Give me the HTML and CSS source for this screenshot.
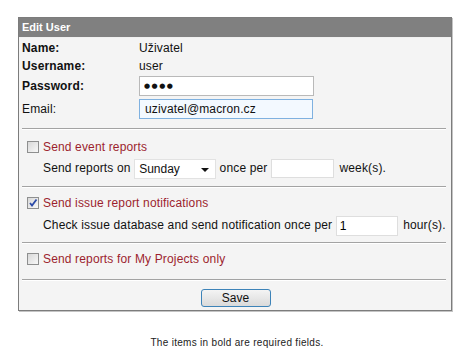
FILE: index.html
```html
<!DOCTYPE html>
<html lang="en">
<head>
<meta charset="UTF-8">
<meta name="viewport" content="width=device-width, initial-scale=1.0">
<title>Edit User</title>
<link rel="stylesheet" href="styles.css">
</head>
<body>

  <div class="panel">
    <div class="panel-title">Edit User</div>

    <div class="panel-body">
      <!-- Datos del usuario -->
      <div class="fields">
        <div class="field name-row">
          <span class="label required">Name:</span>
          <span class="value">Uživatel</span>
        </div>
        <div class="field user-row">
          <span class="label required">Username:</span>
          <span class="value">user</span>
        </div>
        <div class="field input-row">
          <span class="label required">Password:</span>
          <input class="text-input password" type="text" value="●●●●">
        </div>
        <div class="field input-row">
          <span class="label">Email:</span>
          <input class="text-input focused" type="text" value="uzivatel@macron.cz">
        </div>
      </div>

      <div class="separator"></div>

      <div class="section first">
        <label class="check-row">
          <span class="check"></span>
          <span class="check-text">Send event reports</span>
        </label>
        <div class="sub-row">Send reports on <span class="select">Sunday<svg class="arrow" width="8" height="4" viewBox="0 0 8 4"><path d="M0 0h8L4 4z" fill="#111"/></svg></span> once per <input class="small-input week" type="text" value=""> week(s).</div>
      </div>

      <div class="separator"></div>

      <div class="section second">
        <label class="check-row">
          <span class="check checked">
            <svg width="10" height="10" viewBox="0 0 10 10"><path d="M2 5l2 2.5L8.5 1.5" fill="none" stroke="#2b4aa8" stroke-width="1.8"/></svg>
          </span>
          <span class="check-text">Send issue report notifications</span>
        </label>
        <div class="sub-row">Check issue database and send notification once per <input class="small-input hour" type="text" value="1"> hour(s).</div>
      </div>

      <div class="separator"></div>

      <div class="section third">
        <label class="check-row">
          <span class="check"></span>
          <span class="check-text">Send reports for My Projects only</span>
        </label>
      </div>

      <div class="separator"></div>

      <div class="actions">
        <button class="save-button">Save</button>
      </div>
    </div>
  </div>

  <p class="note">The items in bold are required fields.</p>

</body>
</html>
```

FILE: styles.css
```css
  body {
      margin: 0;
      background-color: #fff;
      font-family: "Liberation Sans", Arial, sans-serif;
      font-size: 12px;
      color: #111;
  }

  /* Caja principal */
  .panel {
      width: 434px;
      margin: 17px 0 0 18px;
      border: 1px solid #7c7c7c;
      box-shadow: 1px 1px 0 #c4c4c4;
      box-sizing: border-box;
  }

  .panel-title {
      height: 19px;
      line-height: 19px;
      padding-left: 3px;
      background-color: #808080;
      color: #fff;
      font-size: 11px;
      font-weight: bold;
  }

  .panel-body {
      background-color: #f4f4f4;
      padding: 1px 5px 0 3px;
      border-top: 1px solid #f0f0f0;
      letter-spacing: 0.15px;
  }

  /* Filas de datos */
  .fields {
      padding-bottom: 8px;
  }

  .field {
      display: flex;
      align-items: center;
  }

  .label {
      width: 117px;
      font-size: 12px;
  }

  .label.required {
      font-weight: bold;
  }

  .name-row {
      height: 18px;
  }

  .user-row {
      height: 17px;
  }

  .input-row {
      height: 22px;
      margin-top: 1px;
  }

  .text-input {
      width: 175px;
      height: 20px;
      margin: 0;
      padding: 0 5px;
      border: 1px solid #b9b9b9;
      background-color: #fff;
      box-sizing: border-box;
      font-family: "Liberation Sans", Arial, sans-serif;
      font-size: 12px;
      letter-spacing: 0.15px;
      color: #111;
  }

  .text-input.password {
      padding-left: 4px;
      font-family: "DejaVu Sans", sans-serif;
      font-size: 7px;
      letter-spacing: 1.5px;
  }

  .text-input.focused {
      width: 174px;
      border-color: #7fb1e0;
      background-color: #f3f9ff;
  }

  .separator {
      height: 1px;
      background-color: #a3a3a3;
      border-bottom: 1px solid #fff;
  }

  /* Secciones con casillas */
  .section.first {
      padding: 7px 0 8px;
  }

  .section.second {
      padding: 5px 0 7px;
  }

  .section.second .sub-row {
      margin-top: 2px;
  }

  .section.third {
      padding: 5px 0 10px;
  }

  .check-row {
      display: flex;
      align-items: center;
      height: 20px;
      padding-left: 5px;
  }

  .check {
      display: flex;
      align-items: center;
      justify-content: center;
      width: 12px;
      height: 12px;
      margin-right: 4px;
      border: 1px solid #8e8f8f;
      background: linear-gradient(135deg, #d8d8d8, #f8f8f8);
      box-sizing: border-box;
  }

  .check-text {
      color: #9c1f2e;
  }

  .sub-row {
      height: 20px;
      line-height: 20px;
      margin-top: 1px;
      padding-left: 21px;
      white-space: nowrap;
  }

  .select {
      position: relative;
      display: inline-block;
      vertical-align: middle;
      width: 82px;
      height: 20px;
      padding-left: 4px;
      line-height: 18px;
      border: 1px solid #e2e2e2;
      background-color: #fff;
      box-sizing: border-box;
      font-size: 12px;
      letter-spacing: 0;
  }

  .select .arrow {
      position: absolute;
      right: 6px;
      top: 8px;
  }

  .small-input {
      display: inline-block;
      vertical-align: middle;
      width: 63px;
      height: 19px;
      margin: 0 2px 0 0;
      padding: 0 3px;
      border: 1px solid #dedede;
      background-color: #fff;
      box-sizing: border-box;
      font-family: "Liberation Sans", Arial, sans-serif;
      font-size: 12px;
  }

  .small-input.hour {
      width: 62px;
      height: 20px;
  }

  /* Botón guardar */
  .actions {
      display: flex;
      justify-content: center;
      padding: 8px 0 3px;
  }

  .save-button {
      width: 70px;
      height: 18px;
      margin-left: 3px;
      padding: 0;
      border: 1px solid #3d83b8;
      border-radius: 3px;
      background: linear-gradient(#f4f4f4, #dadada);
      font-family: "Liberation Sans", Arial, sans-serif;
      font-size: 12px;
      color: #111;
  }

  .note {
      margin: 26px 0 0;
      text-align: center;
      font-size: 10px;
      color: #222;
      letter-spacing: 0.3px;
  }
```
